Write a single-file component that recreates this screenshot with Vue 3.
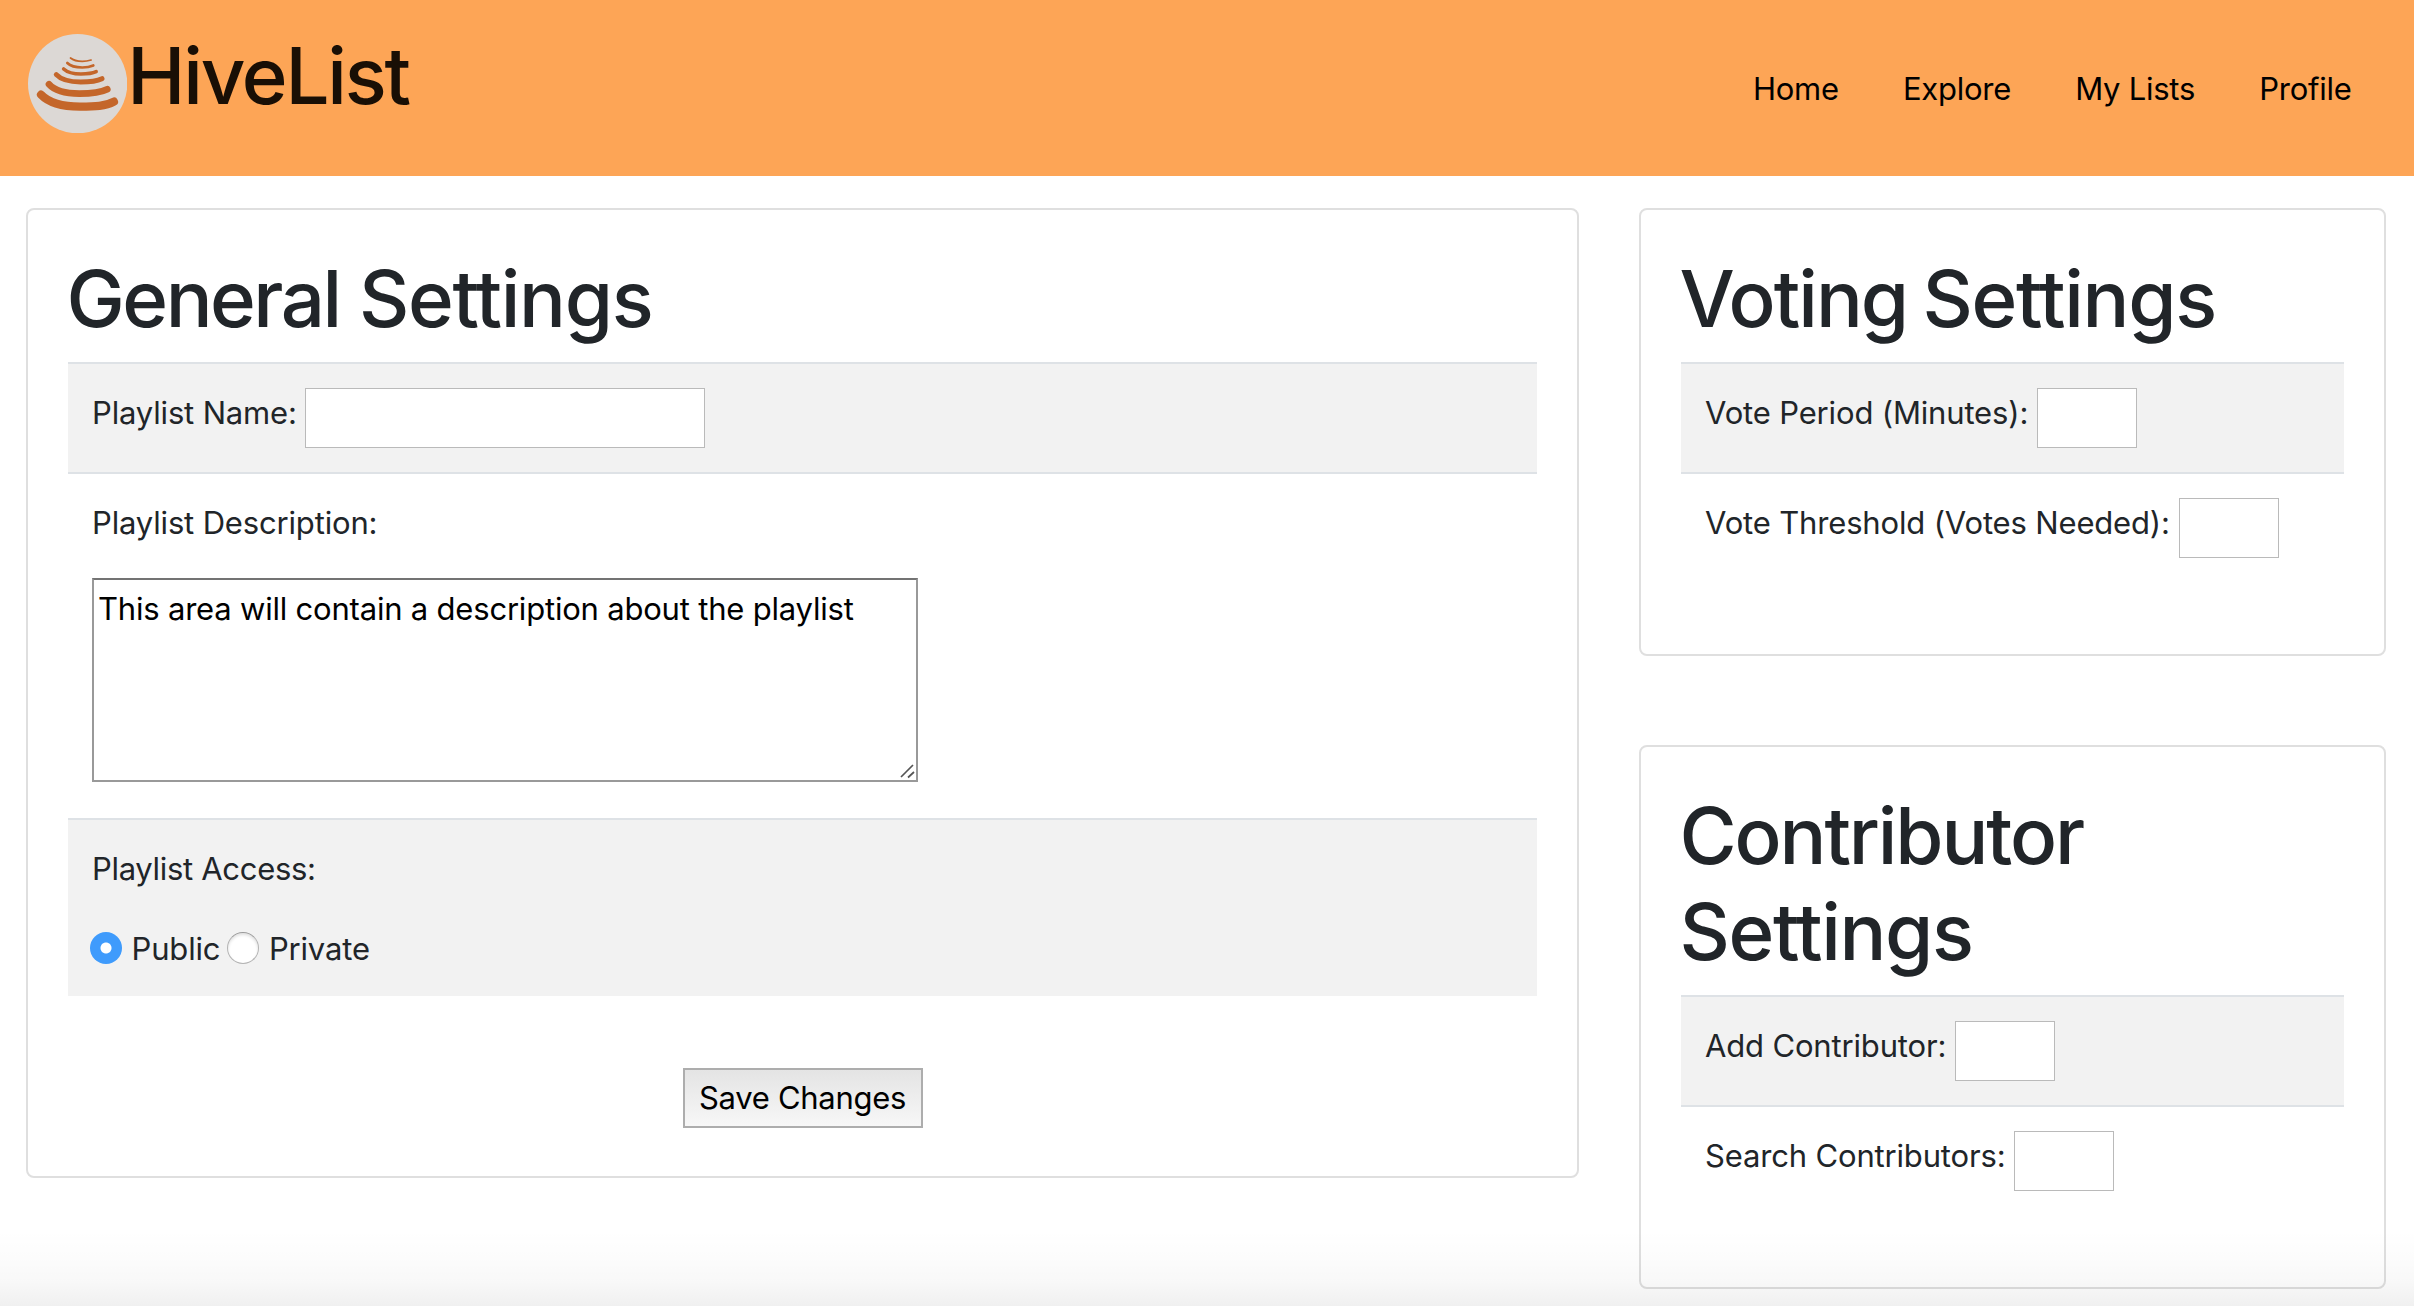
<script setup>
import { ref } from 'vue'

const links = ['Home', 'Explore', 'My Lists', 'Profile']
const description = ref('This area will contain a description about the playlist')
const access = ref('public')
const voting = [
  { id: 'period', label: 'Vote Period (Minutes):' },
  { id: 'threshold', label: 'Vote Threshold (Votes Needed):' },
]
const contributors = [
  { id: 'add', label: 'Add Contributor:' },
  { id: 'search', label: 'Search Contributors:' },
]
</script>

<template>
  <div class="page">
    <header class="navbar">
      <a class="brand">
        <svg class="logo" viewBox="24 42 298 298" aria-hidden="true">
          <circle cx="173" cy="191" r="149" fill="#dcd8d5" />
          <g fill="none" stroke="#c4662a" stroke-linecap="round">
            <path d="M151.500 114C160 121 174 124 187 124C198 124 207 122 213.500 120" stroke-width="5" />
            <path d="M142 129C152 139 170 142.500 187 142.500C201 142.500 212 140 220 136.500" stroke-width="8" />
            <path d="M131 147C143 158 163 162 183 162C202 162 218 160 228.500 155" stroke-width="11" />
            <path d="M109 164C124 180 152 186 182 186C208 186 230 184 246 176" stroke-width="15" />
            <path d="M87 193C104 212 138 221 178 221C212 221 240 219 262 208" stroke-width="20" />
            <path d="M63 224C84 246 126 260 180 260C226 260 256 259 282 245" stroke-width="24.500" />
          </g>
        </svg>
        <span class="brand-name">HiveList</span>
      </a>
      <nav class="links">
        <a v-for="link in links" :key="link">{{ link }}</a>
      </nav>
    </header>

    <main class="content">
      <section class="card general">
        <h1><span class="first">General</span> Settings</h1>
        <div class="row striped field">
          <label for="name">Playlist Name:</label>
          <input id="name" class="wide" type="text" />
        </div>
        <div class="row description">
          <label for="description">Playlist Description:</label>
          <div class="area">
            <textarea id="description" v-model="description" spellcheck="false"></textarea>
            <svg class="grip" viewBox="0 0 16 16" aria-hidden="true">
              <path d="M1 14L13 2M8 14.500L14 9" fill="none" stroke="#555" stroke-width="1.700" />
            </svg>
          </div>
        </div>
        <div class="row striped access">
          <p>Playlist Access:</p>
          <div class="choices">
            <label><input v-model="access" type="radio" value="public" />Public</label>
            <label><input v-model="access" type="radio" value="private" />Private</label>
          </div>
        </div>
        <button class="save" type="button">Save Changes</button>
      </section>

      <aside class="side">
        <section class="card voting">
          <h1><span class="first">Voting</span> Settings</h1>
          <div v-for="(f, i) in voting" :key="f.id" class="row field" :class="{ striped: i === 0 }">
            <label :for="f.id">{{ f.label }}</label>
            <input :id="f.id" type="text" />
          </div>
        </section>
        <section class="card contributors">
          <h1><span class="first">Contributor</span><br />Settings</h1>
          <div v-for="(f, i) in contributors" :key="f.id" class="row field" :class="{ striped: i === 0 }">
            <label :for="f.id">{{ f.label }}</label>
            <input :id="f.id" type="text" />
          </div>
        </section>
      </aside>
    </main>
    <div class="shade"></div>
  </div>
</template>

<style>
body {
  margin: 0;
  background: #fff;
}
</style>

<style scoped>
.page {
  position: relative;
  box-sizing: border-box;
  width: 100%;
  height: 1306px;
  overflow: hidden;
  font-family: Inter, "Noto Sans", sans-serif;
  font-size: 31px;
  line-height: 49px;
  letter-spacing: -0.16px;
  color: #212529;
}
.page * {
  box-sizing: border-box;
}
.navbar {
  display: flex;
  align-items: flex-start;
  justify-content: space-between;
  height: 176px;
  padding: 0 62.500px 0 28px;
  background: #fda556;
}
.brand {
  display: flex;
  align-items: flex-start;
}
.logo {
  width: 99.300px;
  height: 99.300px;
  margin-top: 34px;
}
.brand-name {
  margin-top: 28px;
  font-size: 78px;
  font-weight: 500;
  line-height: 96px;
  letter-spacing: -2.200px;
  color: #190f05;
}
.links {
  display: flex;
  gap: 64.200px;
  margin-top: 64px;
  letter-spacing: -0.260px;
  color: #000;
}
.content {
  display: flex;
  align-items: flex-start;
  gap: 60px;
  padding: 32px 28px 0 26px;
}
.card {
  padding: 40px;
  border: 2px solid #dfdfdf;
  border-radius: 8px;
}
.general {
  width: 1553px;
  height: 970px;
}
.side {
  display: flex;
  flex: 1;
  flex-direction: column;
  gap: 89px;
}
.voting {
  height: 448px;
}
.contributors {
  height: 544px;
}
h1 {
  margin: 0 0 15px -1.500px;
  padding-top: 1px;
  font-size: 78px;
  font-weight: 500;
  line-height: 96px;
  letter-spacing: -1.350px;
}
.general .first {
  letter-spacing: -2.500px;
}
.voting h1 {
  word-spacing: -4px;
}
.voting .first {
  letter-spacing: -2px;
}
.contributors .first {
  letter-spacing: -2.120px;
}
.row {
  padding: 24px;
  border-top: 2px solid #dee2e6;
}
.striped {
  background: #f2f2f2;
}
.field {
  display: flex;
  align-items: flex-start;
  gap: 8px;
  height: 110px;
}
.side .field {
  gap: 9px;
}
.field input {
  width: 100px;
  height: 60px;
  margin: 0;
  padding: 0 4px;
  border: 1px solid #bababa;
  border-radius: 0;
  background: #fff;
  font: inherit;
}
.field .wide {
  width: 400px;
}
.description {
  height: 346px;
}
.description label,
.access p {
  display: block;
  margin: 0 0 31px;
}
.access p {
  letter-spacing: -0.310px;
}
.area {
  position: relative;
  width: 826px;
  height: 204px;
}
textarea {
  display: block;
  width: 100%;
  height: 100%;
  margin: 0;
  padding: 4px;
  border: 2px solid #999;
  border-top-color: #737373;
  border-radius: 0;
  outline: 0;
  resize: none;
  background: #fff;
  color: #000;
  font: inherit;
  letter-spacing: -0.200px;
}
.grip {
  position: absolute;
  right: 2px;
  bottom: 3px;
  width: 16px;
  height: 16px;
}
.access {
  height: 178px;
}
.choices {
  display: flex;
  gap: 7px;
  margin-left: -2px;
}
.choices label {
  display: flex;
  align-items: flex-start;
}
.choices input {
  flex: none;
  appearance: none;
  width: 32px;
  height: 32px;
  margin: 8px 9.500px 0 0;
  border: 1px solid #b4b4b4;
  border-top-color: #999;
  border-radius: 50%;
  background: #fff;
  box-shadow: inset 0 2px 3px rgba(0, 0, 0, 0.120);
}
.choices input:checked {
  border: 0;
  background: radial-gradient(circle, #fff 5px, #3f9bfc 6px);
  box-shadow: none;
}
.save {
  display: block;
  width: 240px;
  height: 60px;
  margin: 72px auto 0;
  padding: 0 0 1px;
  border: 2px solid #adadad;
  border-radius: 0;
  background: linear-gradient(#e4e4e4, #f7f7f7);
  color: #000;
  font: inherit;
  line-height: 49px;
  letter-spacing: -0.280px;
}
.shade {
  position: absolute;
  right: 0;
  bottom: 0;
  left: 0;
  height: 76px;
  background: linear-gradient(rgba(0, 0, 0, 0), rgba(0, 0, 0, 0.010) 35%, rgba(0, 0, 0, 0.028) 68%, rgba(0, 0, 0, 0.060));
  pointer-events: none;
}
</style>
